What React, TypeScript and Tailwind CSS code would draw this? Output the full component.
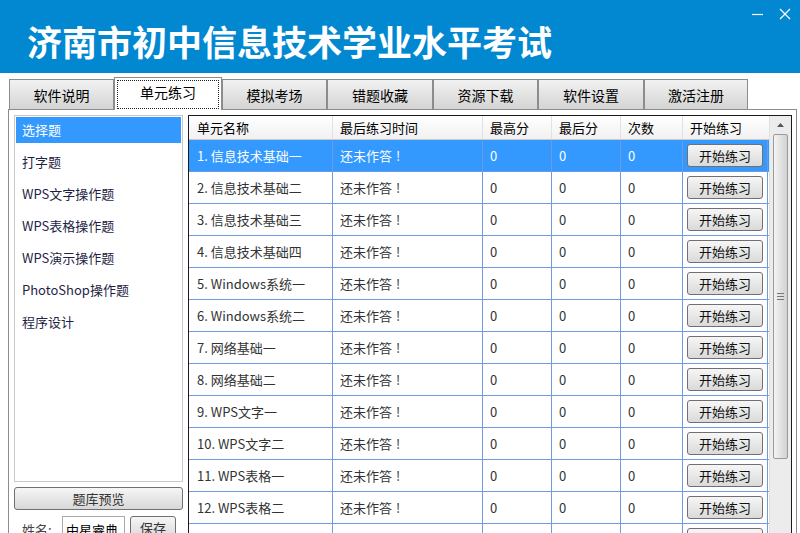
import React from 'react';

const tabs = ['软件说明', '单元练习', '模拟考场', '错题收藏', '资源下载', '软件设置', '激活注册'];
const tabWidths = [105, 108, 105, 106, 105, 106, 104];

const categories = ['选择题', '打字题', 'WPS文字操作题', 'WPS表格操作题', 'WPS演示操作题', 'PhotoShop操作题', '程序设计'];

const units = [
  '1. 信息技术基础一',
  '2. 信息技术基础二',
  '3. 信息技术基础三',
  '4. 信息技术基础四',
  '5. Windows系统一',
  '6. Windows系统二',
  '7. 网络基础一',
  '8. 网络基础二',
  '9. WPS文字一',
  '10. WPS文字二',
  '11. WPS表格一',
  '12. WPS表格二',
  '',
];

const font = { fontFamily: '"Noto Sans CJK SC", "Noto Sans", sans-serif' };

const StartButton: React.FC = () => (
  <div className="w-[76px] h-[23px] rounded-[3px] border border-[#707070] bg-gradient-to-b from-[#f6f6f6] to-[#dadada] flex items-center justify-center text-[13px] text-[#111]">
    开始练习
  </div>
);

export default function App() {
  return (
    <div className="w-[800px] h-[533px] overflow-hidden bg-white relative" style={font}>
      {/* title bar */}
      <div className="h-[73px] bg-[#0288d1] flex items-center pl-[27px] relative">
        <h1 className="text-[35px] font-bold text-white leading-none pt-[8px]">济南市初中信息技术学业水平考试</h1>
        <div className="absolute top-[6px] right-[8px] flex gap-[14px]">
          <svg width="14" height="16" viewBox="0 0 14 16">
            <line x1="2" y1="8.5" x2="13" y2="8.5" stroke="white" strokeWidth="1.2" />
          </svg>
          <svg width="14" height="16" viewBox="0 0 14 16">
            <line x1="2" y1="3" x2="12" y2="13" stroke="white" strokeWidth="1.3" />
            <line x1="12" y1="3" x2="2" y2="13" stroke="white" strokeWidth="1.3" />
          </svg>
        </div>
      </div>

      {/* tabs */}
      <div className="h-[36px] flex items-end pl-[9px]">
        {tabs.map((t, i) =>
          i === 1 ? (
            <div
              key={t}
              style={{ width: tabWidths[i] }}
              className="h-[33px] -mb-px relative z-10 bg-white border border-b-0 border-[#8c8c8c] p-[2px] pb-[1px]"
            >
              <div className="h-full border border-dotted border-[#222] flex items-center justify-center text-[14px] text-black pb-[4px]">
                {t}
              </div>
            </div>
          ) : (
            <div
              key={t}
              style={{ width: tabWidths[i] }}
              className="h-[30px] border border-[#8c8c8c] border-b-0 bg-gradient-to-b from-[#f2f2f2] to-[#d4d4d4] flex items-center justify-center text-[14px] text-black pt-[2px]"
            >
              {t}
            </div>
          )
        )}
      </div>

      {/* panel */}
      <div className="ml-[8px] mr-[3px] h-[500px] border border-[#8c8c8c] flex pt-[5px] pl-[5px] gap-[5px]">
        {/* left */}
        <div className="w-[169px] flex flex-col">
          <div className="h-[367px] border border-[#c8c8c8] p-px flex flex-col">
            {categories.map((c, i) =>
              i === 0 ? (
                <div key={c} className="h-[26px] mb-[3px] shrink-0 flex items-center pl-[6px] text-[13px] bg-[#3399ff] text-white">
                  {c}
                </div>
              ) : (
                <div key={c} className="h-[32px] shrink-0 flex items-center pl-[6px] text-[13px] text-[#1f1f45]">
                  {c}
                </div>
              )
            )}
          </div>
          <div className="mt-[5px] h-[23px] rounded-[3px] border border-[#707070] bg-gradient-to-b from-[#f6f6f6] to-[#d8d8d8] flex items-center justify-center text-[13px] text-[#333]">
            题库预览
          </div>
          <div className="mt-[6px] flex items-start pl-[8px]">
            <span className="text-[13px] text-[#444] mt-[4px] w-[40px]">姓名:</span>
            <div className="w-[63px] h-[26px] border border-[#aaa] text-[13px] text-black pl-[3px] pt-[3px]">中星睿典</div>
            <div className="ml-[5px] w-[46px] h-[24px] rounded-[3px] border border-[#707070] bg-gradient-to-b from-[#f6f6f6] to-[#d8d8d8] flex items-center justify-center text-[13px] text-[#333]">
              保存
            </div>
          </div>
        </div>

        {/* grid */}
        <div className="w-[604px] h-[440px] border border-[#1a1a1a] flex overflow-hidden">
          <div className="w-[580px] flex flex-col">
            <div className="h-[24px] shrink-0 flex bg-gradient-to-b from-white to-[#f1f1f1] border-b border-[#c8c8c8] text-[13px] text-black">
              <div className="w-[144px] pl-[8px] flex items-center border-r border-[#e2e2e2]">单元名称</div>
              <div className="w-[150px] pl-[7px] flex items-center border-r border-[#e2e2e2]">最后练习时间</div>
              <div className="w-[69px] pl-[7px] flex items-center border-r border-[#e2e2e2]">最高分</div>
              <div className="w-[69px] pl-[7px] flex items-center border-r border-[#e2e2e2]">最后分</div>
              <div className="w-[62px] pl-[7px] flex items-center border-r border-[#e2e2e2]">次数</div>
              <div className="flex-1 pl-[7px] flex items-center">开始练习</div>
            </div>
            {units.map((u, i) => {
              const sel = i === 0;
              return (
                <div
                  key={i}
                  className={`h-[32px] shrink-0 flex border-b border-[#6e9ae2] text-[13px] ${
                    sel ? 'bg-[#3399ff] text-white' : 'bg-white text-[#333]'
                  }`}
                >
                  <div className="w-[144px] pl-[8px] flex items-center border-r border-[#6e9ae2]">{u}</div>
                  <div className="w-[150px] pl-[7px] flex items-center border-r border-[#6e9ae2]">
                    {u && (
                      <>
                        还未作答<span className="pl-[4px]">!</span>
                      </>
                    )}
                  </div>
                  <div className="w-[69px] pl-[7px] flex items-center border-r border-[#6e9ae2]">{u && '0'}</div>
                  <div className="w-[69px] pl-[7px] flex items-center border-r border-[#6e9ae2]">{u && '0'}</div>
                  <div className="w-[62px] pl-[7px] flex items-center border-r border-[#6e9ae2]">{u && '0'}</div>
                  <div className="w-[85px] flex items-start pt-[4px] pl-[4px] border-r border-[#6e9ae2]">
                    <StartButton />
                  </div>
                </div>
              );
            })}
          </div>
          {/* scrollbar */}
          <div className="flex-1 bg-[#ececec] flex flex-col items-center border-l border-[#e0e0e0]">
            <svg width="9" height="16" viewBox="0 0 9 16" className="mt-[1px]">
              <polygon points="1,10 4.5,6 8,10" fill="#555" />
            </svg>
            <div className="mt-[1px] w-[15px] h-[325px] rounded-[2px] border border-[#9a9a9a] bg-gradient-to-r from-[#f4f4f4] via-[#e2e2e2] to-[#d2d2d2] flex flex-col items-center justify-center gap-[2px]">
              <div className="w-[7px] h-px bg-[#777]" />
              <div className="w-[7px] h-px bg-[#777]" />
              <div className="w-[7px] h-px bg-[#777]" />
            </div>
          </div>
        </div>
      </div>
    </div>
  );
}
